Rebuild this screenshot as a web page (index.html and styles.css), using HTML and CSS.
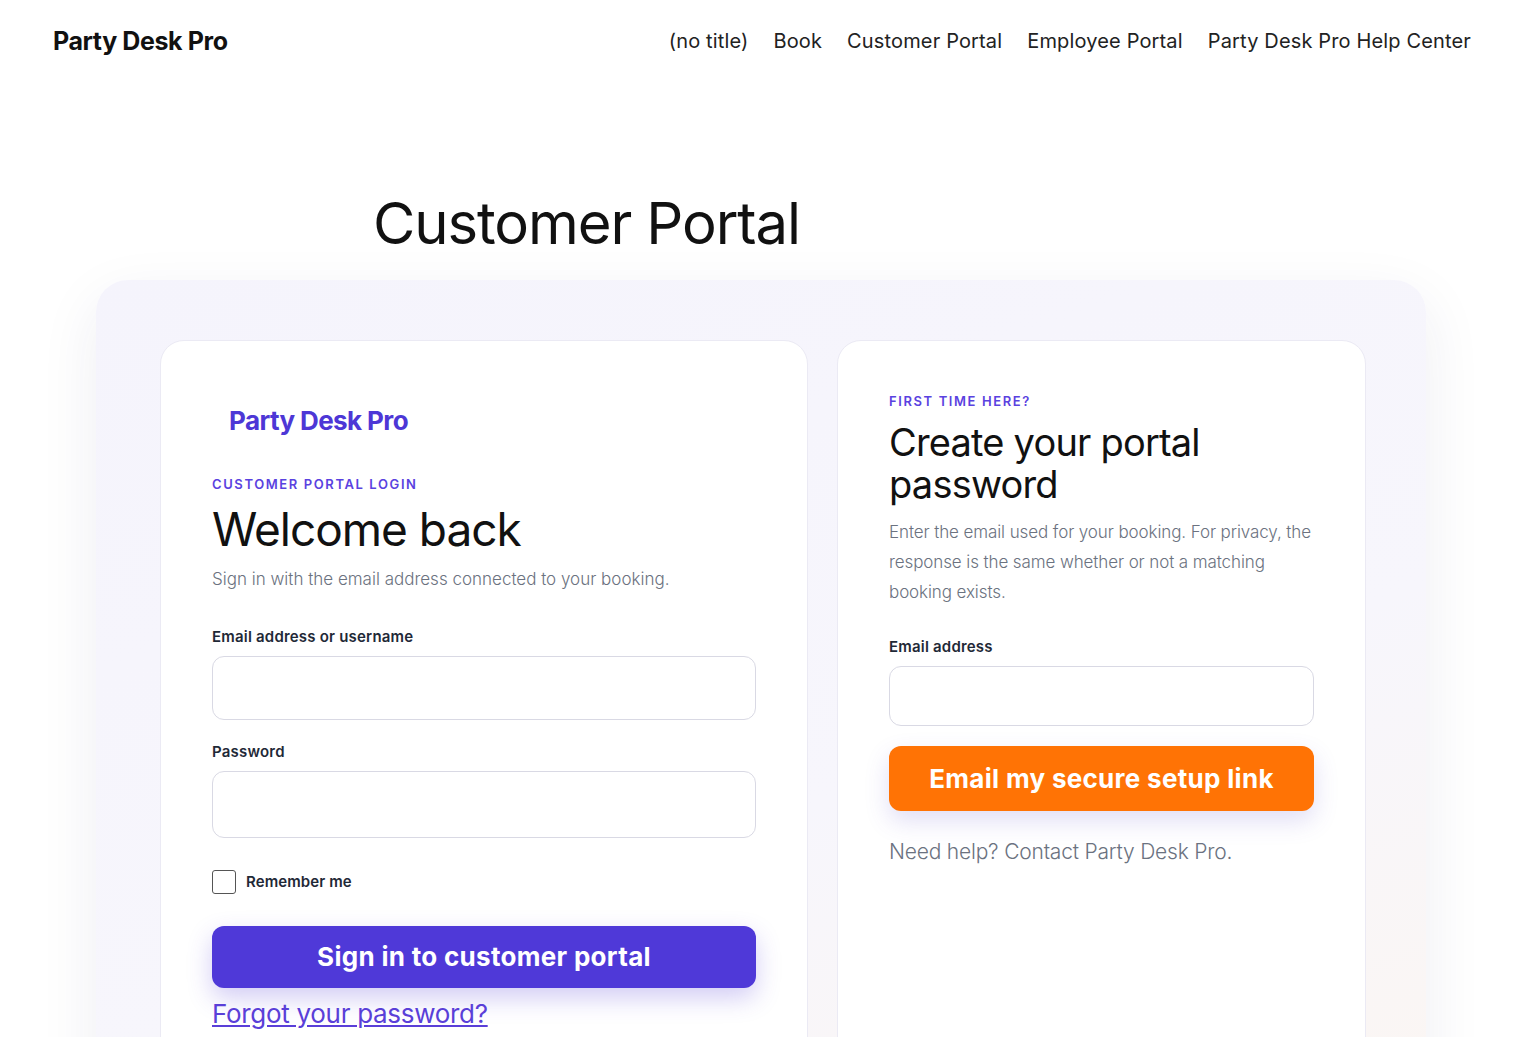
FILE: index.html
```html
<!doctype html>
<html>
<head>
<meta charset="utf-8">
<title>Customer Portal – Party Desk Pro</title>
<link rel="stylesheet" href="styles.css">
</head>
<body>
<header class="site-header">
	<a href="#" class="brand">Party Desk Pro</a>
	<nav class="main-nav">
		<a href="#">(no title)</a>
		<a href="#">Book</a>
		<a href="#">Customer Portal</a>
		<a href="#">Employee Portal</a>
		<a href="#">Party Desk Pro Help Center</a>
	</nav>
</header>

<main class="page">
	<h1 class="page-title">Customer Portal</h1>

	<div class="portal">
		<section class="card login">
			<div class="card-logo">Party Desk Pro</div>
			<p class="eyebrow">Customer portal login</p>
			<h2 class="welcome">Welcome back</h2>
			<p class="lead">Sign in with the email address connected to your booking.</p>
			<form class="form">
				<label class="field">
					<span>Email address or username</span>
					<input type="text" class="input">
				</label>
				<label class="field">
					<span>Password</span>
					<input type="password" class="input tall">
				</label>
				<label class="remember">
					<input type="checkbox">
					<span>Remember me</span>
				</label>
				<button type="button" class="btn btn-purple">Sign in to customer portal</button>
				<a href="#" class="forgot">Forgot your password?</a>
			</form>
		</section>

		<section class="card setup">
			<p class="eyebrow">First time here?</p>
			<h2 class="setup-title">Create your portal password</h2>
			<p class="lead small">Enter the email used for your booking. For privacy, the response is the same whether or not a matching booking exists.</p>
			<form class="form">
				<label class="field">
					<span>Email address</span>
					<input type="email" class="input short">
				</label>
				<button type="button" class="btn btn-orange">Email my secure setup link</button>
			</form>
			<p class="help">Need help? Contact Party Desk Pro.</p>
		</section>
	</div>
</main>
</body>
</html>
```

FILE: styles.css
```css
*{margin:0;padding:0;box-sizing:border-box;}
body{font-family:Inter,"Noto Sans",sans-serif;color:#111;background:#fff;overflow:hidden;height:1037px;}
a{color:inherit;text-decoration:none;}

.site-header{display:flex;justify-content:space-between;align-items:center;padding:0 45px 0 53px;height:82px;}
.brand{font-size:25px;font-weight:700;letter-spacing:-0.4px;color:#111;}
.main-nav{display:flex;gap:25px;}
.main-nav a{font-size:20px;font-weight:400;letter-spacing:0.15px;color:#222;}

.page{padding-top:110px;}
.page-title{font-size:58px;font-weight:400;letter-spacing:-1.1px;line-height:1.1;padding-left:373px;color:#111;}

.portal{margin:24px 90px 0 96px;padding:60px 60px 40px 64px;border-radius:32px;
	background:linear-gradient(160deg,#f5f4fc 0%,#f7f6fc 60%,#fbf6f3 100%);
	box-shadow:0 20px 60px rgba(40,40,90,0.08);
	display:grid;grid-template-columns:648px 529px;gap:29px;min-height:800px;}

.card{background:#fff;border:1px solid #ebeaf4;border-radius:24px;padding:60px 51px 40px 51px;}
.card.setup{padding-top:52px;}

.card-logo{font-size:26px;font-weight:700;color:#4d37d6;letter-spacing:-0.6px;padding:4px 0 0 17px;margin-bottom:40px;}
.eyebrow{font-size:13px;font-weight:600;letter-spacing:1.6px;text-transform:uppercase;color:#5a42e0;}
.welcome{font-size:46px;font-weight:400;letter-spacing:-1px;line-height:1.2;margin-top:10px;color:#111;}
.lead{font-size:17px;font-weight:300;color:#6b7280;letter-spacing:0;margin-top:12px;}
.lead.small{line-height:30px;margin-top:12px;letter-spacing:-0.1px;}
.setup-title{font-size:38px;font-weight:400;letter-spacing:-0.8px;line-height:42px;margin-top:12px;color:#111;}

.form{display:flex;flex-direction:column;}
.field{display:flex;flex-direction:column;margin-top:38px;}
.field span{font-size:15px;font-weight:600;color:#1f2937;letter-spacing:0.2px;margin-bottom:10px;}
.input{height:64px;border:1px solid #d9d9e4;border-radius:12px;background:#fff;font-size:16px;padding:0 16px;}
.input.tall{height:67px;}
.input.short{height:60px;}
.login .field + .field{margin-top:22px;}
.setup .field{margin-top:30px;}

.remember{display:flex;align-items:center;gap:10px;margin-top:32px;font-size:15px;font-weight:600;color:#1f2937;letter-spacing:0.1px;}
.remember input{width:24px;height:24px;appearance:none;border:1.5px solid #555;border-radius:3px;background:#fff;}

.btn{border:0;border-radius:12px;color:#fff;font-family:inherit;font-size:26px;font-weight:700;letter-spacing:0.3px;}
.btn-purple{height:62px;margin-top:32px;background:#4f39d8;box-shadow:0 10px 24px rgba(79,57,216,0.25);}
.btn-orange{height:65px;margin-top:20px;background:#ff7305;box-shadow:0 10px 24px rgba(90,70,200,0.18);}
.forgot{font-size:26px;color:#5a3fd8;text-decoration:underline;margin-top:10px;letter-spacing:-0.3px;align-self:flex-start;}
.help{font-size:21px;font-weight:300;color:#6b7280;margin-top:28px;letter-spacing:-0.2px;}
```
